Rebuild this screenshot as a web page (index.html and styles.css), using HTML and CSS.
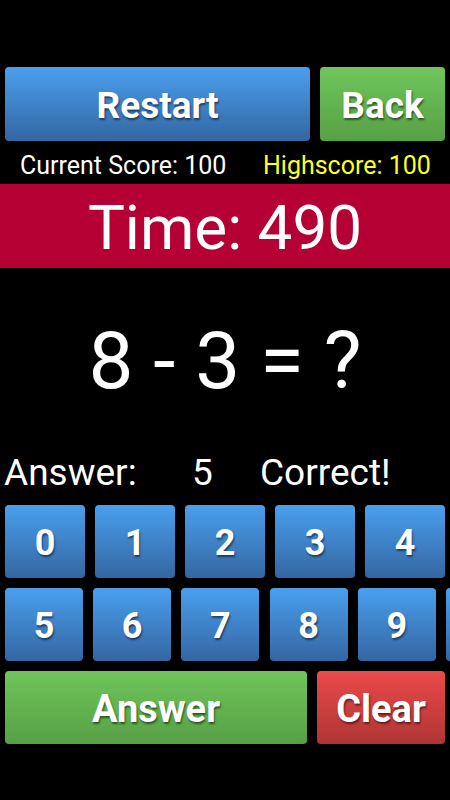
FILE: index.html
```html
<!DOCTYPE html>
<html>
<head>
<meta charset="utf-8">
<link rel="stylesheet" href="styles.css">
</head>
<body>
<div class="screen">
  <div class="top-row">
    <button class="btn blue restart">Restart</button>
    <button class="btn green back">Back</button>
  </div>
  <div class="scores">
    <span class="current">Current Score: 100</span>
    <span class="high">Highscore: 100</span>
  </div>
  <div class="timer">Time: 490</div>
  <div class="equation">8 - 3 = ?</div>
  <div class="answer-row">
    <span class="label">Answer:</span>
    <span class="value">5</span>
    <span class="status">Correct!</span>
  </div>
  <div class="keys keys-a">
    <button class="btn blue key">0</button>
    <button class="btn blue key">1</button>
    <button class="btn blue key">2</button>
    <button class="btn blue key">3</button>
    <button class="btn blue key">4</button>
  </div>
  <div class="keys keys-b">
    <button class="btn blue key">5</button>
    <button class="btn blue key">6</button>
    <button class="btn blue key">7</button>
    <button class="btn blue key">8</button>
    <button class="btn blue key">9</button>
    <button class="btn blue key" aria-label="more"></button>
  </div>
  <div class="bottom-row">
    <button class="btn green submit">Answer</button>
    <button class="btn red clear">Clear</button>
  </div>
</div>
</body>
</html>
```
FILE: styles.css
```css
html, body {
  margin: 0;
  padding: 0;
  background: #000;
  width: 450px;
  height: 800px;
  overflow: hidden;
}
.screen {
  width: 450px;
  height: 800px;
  overflow: hidden;
  font-family: Roboto, "Liberation Sans", sans-serif;
  color: #fff;
}
.btn {
  border: none;
  margin: 0;
  padding: 3px 0 0;
  border-radius: 4px;
  color: #fff;
  font-family: Roboto, "Liberation Sans", sans-serif;
  font-weight: bold;
  font-size: 37px;
  text-shadow: 1px 2px 2px rgba(0, 0, 0, 0.5);
  flex: none;
  height: 73px;
}
.blue {
  background: linear-gradient(to bottom, #4a9fee, #3466a2);
}
.green {
  background: linear-gradient(to bottom, #6fc55b, #57a045);
}
.red {
  background: linear-gradient(to bottom, #ea4a4a, #b03535);
}
.top-row {
  display: flex;
  gap: 10px;
  padding: 67px 5px 0;
}
.restart {
  width: 305px;
  height: 74px;
}
.back {
  width: 125px;
  height: 74px;
}
.scores {
  display: flex;
  padding: 6px 0 0 20px;
  height: 37px;
  line-height: 37px;
  font-size: 25px;
  white-space: nowrap;
}
.current {
  width: 243px;
}
.high {
  color: #ffff22;
}
.timer {
  background: #b40033;
  height: 80px;
  padding-top: 4px;
  line-height: 80px;
  font-size: 62px;
  text-align: center;
}
.equation {
  margin-top: 53px;
  height: 80px;
  line-height: 80px;
  font-size: 80px;
  text-align: center;
}
.answer-row {
  margin-top: 52px;
  display: grid;
  grid-template-columns: 188px 68px auto;
  padding-left: 4px;
  height: 40px;
  line-height: 40px;
  font-size: 37px;
  white-space: nowrap;
}
.keys {
  display: flex;
  gap: 10px;
  padding: 0 5px;
}
.keys .key {
  font-size: 36px;
}
.keys-a {
  margin-top: 12px;
}
.keys-a .key {
  width: 80px;
}
.keys-b {
  margin-top: 10px;
  gap: 10.2px;
}
.keys-b .key {
  width: 78px;
}
.bottom-row {
  display: flex;
  gap: 10px;
  padding: 10px 5px 0;
}
.submit {
  width: 302px;
  font-size: 38px;
}
.clear {
  width: 128px;
  font-size: 38px;
}
```
